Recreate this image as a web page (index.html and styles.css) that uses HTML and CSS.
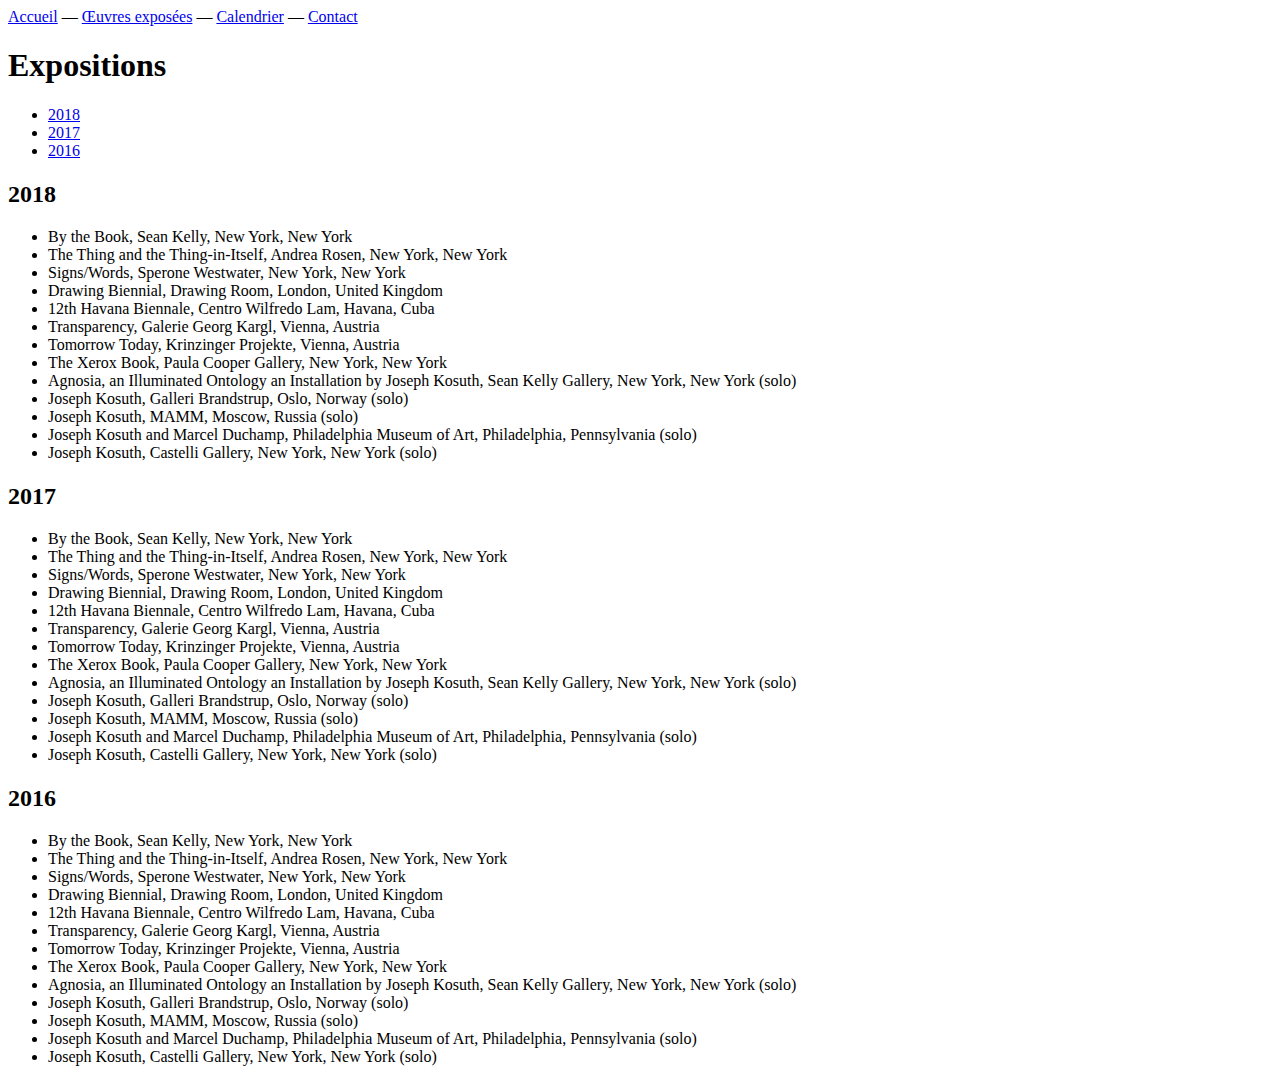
FILE: index.html
```html
<!DOCTYPE html>
<html lang="fr">
<head>
<meta charset="utf-8">
<title>Expositions</title>
<link rel="stylesheet" href="styles.css">
</head>
<body class="page">
<div class="nav"><a href="#">Accueil</a> — <a href="#">Œuvres exposées</a> — <a href="#">Calendrier</a> — <a href="#">Contact</a></div>
<h1 class="title">Expositions</h1>
<ul class="years">
<li><a href="#y2018">2018</a></li>
<li><a href="#y2017">2017</a></li>
<li><a href="#y2016">2016</a></li>
</ul>

<h2 class="year" id="y2018">2018</h2>
<ul class="list">
<li>By the Book, Sean Kelly, New York, New York</li>
<li>The Thing and the Thing-in-Itself, Andrea Rosen, New York, New York</li>
<li>Signs/Words, Sperone Westwater, New York, New York</li>
<li>Drawing Biennial, Drawing Room, London, United Kingdom</li>
<li>12th Havana Biennale, Centro Wilfredo Lam, Havana, Cuba</li>
<li>Transparency, Galerie Georg Kargl, Vienna, Austria</li>
<li>Tomorrow Today, Krinzinger Projekte, Vienna, Austria</li>
<li>The Xerox Book, Paula Cooper Gallery, New York, New York</li>
<li>Agnosia, an Illuminated Ontology an Installation by Joseph Kosuth, Sean Kelly Gallery, New York, New York (solo)</li>
<li>Joseph Kosuth, Galleri Brandstrup, Oslo, Norway (solo)</li>
<li>Joseph Kosuth, MAMM, Moscow, Russia (solo)</li>
<li>Joseph Kosuth and Marcel Duchamp, Philadelphia Museum of Art, Philadelphia, Pennsylvania (solo)</li>
<li>Joseph Kosuth, Castelli Gallery, New York, New York (solo)</li>
</ul>

<h2 class="year" id="y2017">2017</h2>
<ul class="list">
<li>By the Book, Sean Kelly, New York, New York</li>
<li>The Thing and the Thing-in-Itself, Andrea Rosen, New York, New York</li>
<li>Signs/Words, Sperone Westwater, New York, New York</li>
<li>Drawing Biennial, Drawing Room, London, United Kingdom</li>
<li>12th Havana Biennale, Centro Wilfredo Lam, Havana, Cuba</li>
<li>Transparency, Galerie Georg Kargl, Vienna, Austria</li>
<li>Tomorrow Today, Krinzinger Projekte, Vienna, Austria</li>
<li>The Xerox Book, Paula Cooper Gallery, New York, New York</li>
<li>Agnosia, an Illuminated Ontology an Installation by Joseph Kosuth, Sean Kelly Gallery, New York, New York (solo)</li>
<li>Joseph Kosuth, Galleri Brandstrup, Oslo, Norway (solo)</li>
<li>Joseph Kosuth, MAMM, Moscow, Russia (solo)</li>
<li>Joseph Kosuth and Marcel Duchamp, Philadelphia Museum of Art, Philadelphia, Pennsylvania (solo)</li>
<li>Joseph Kosuth, Castelli Gallery, New York, New York (solo)</li>
</ul>

<h2 class="year" id="y2016">2016</h2>
<ul class="list">
<li>By the Book, Sean Kelly, New York, New York</li>
<li>The Thing and the Thing-in-Itself, Andrea Rosen, New York, New York</li>
<li>Signs/Words, Sperone Westwater, New York, New York</li>
<li>Drawing Biennial, Drawing Room, London, United Kingdom</li>
<li>12th Havana Biennale, Centro Wilfredo Lam, Havana, Cuba</li>
<li>Transparency, Galerie Georg Kargl, Vienna, Austria</li>
<li>Tomorrow Today, Krinzinger Projekte, Vienna, Austria</li>
<li>The Xerox Book, Paula Cooper Gallery, New York, New York</li>
<li>Agnosia, an Illuminated Ontology an Installation by Joseph Kosuth, Sean Kelly Gallery, New York, New York (solo)</li>
<li>Joseph Kosuth, Galleri Brandstrup, Oslo, Norway (solo)</li>
<li>Joseph Kosuth, MAMM, Moscow, Russia (solo)</li>
<li>Joseph Kosuth and Marcel Duchamp, Philadelphia Museum of Art, Philadelphia, Pennsylvania (solo)</li>
<li>Joseph Kosuth, Castelli Gallery, New York, New York (solo)</li>
</ul>
</body>
</html>
```

FILE: styles.css
```css
.page {
  margin: 8px;
  font-family: "Liberation Serif", "Times New Roman", serif;
  font-size: 16px;
  line-height: 18px;
  color: #000;
  background: #fff;
}
.page a {
  color: #0000ee;
  text-decoration: underline;
}
.title {
  font-size: 32px;
  line-height: 37px;
  font-weight: bold;
  margin: 21.44px 0;
}
.year {
  font-size: 24px;
  line-height: 28.2px;
  font-weight: bold;
  margin: 19.92px 0;
}
.years,
.list {
  margin: 16px 0;
  padding-left: 40px;
  list-style: disc;
}
```
